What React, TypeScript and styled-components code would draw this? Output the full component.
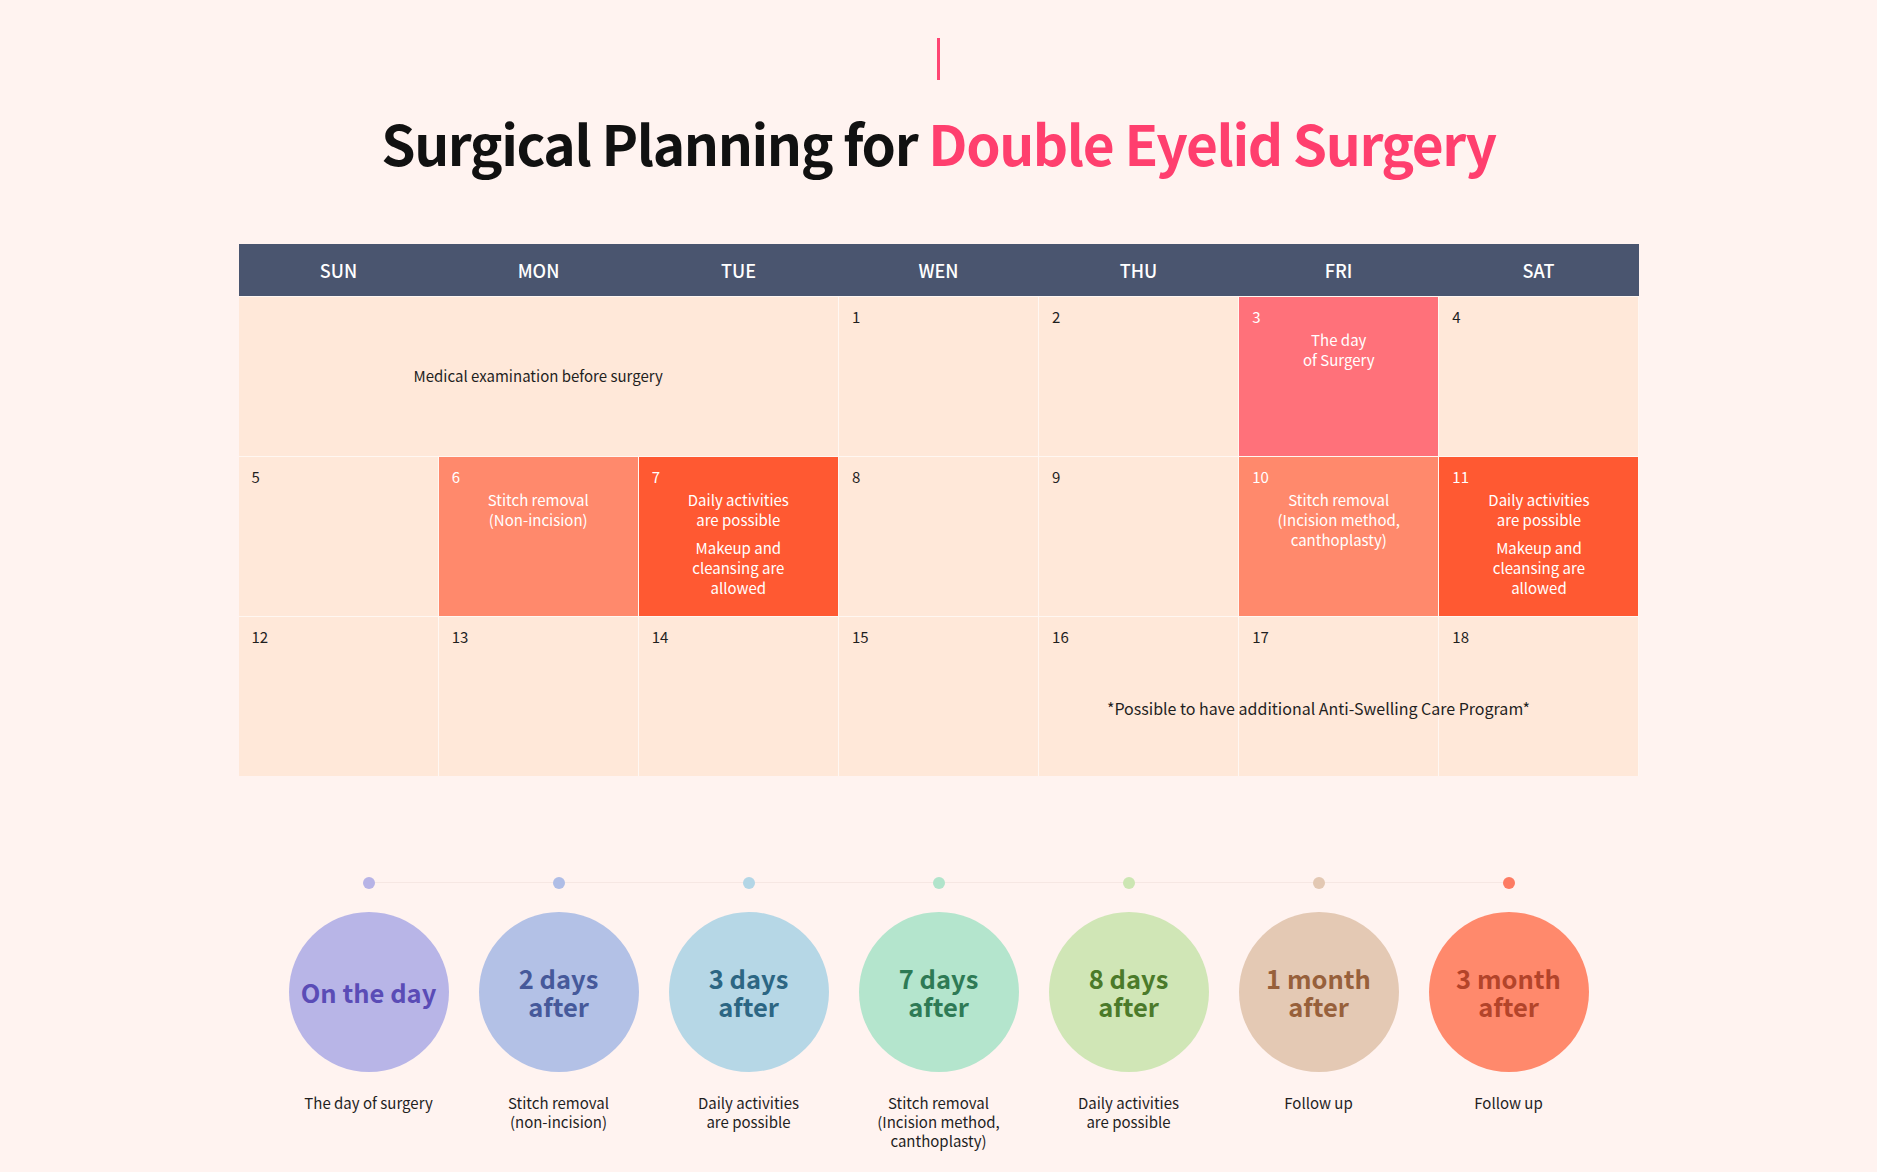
import React from "react";
import styled, { createGlobalStyle } from "styled-components";

const Global = createGlobalStyle`
  html, body { margin: 0; padding: 0; background: #fff3f0; }
  body { font-family: "Noto Sans CJK KR", "Noto Sans", sans-serif; color: #1f1f1f; }
  * { box-sizing: border-box; }
`;

const Page = styled.div`
  display: flex;
  flex-direction: column;
  align-items: center;
  padding: 38px 0 40px;
`;

const Accent = styled.div`
  width: 3px;
  height: 42px;
  background: #ff4573;
`;

const Title = styled.h1`
  margin: 22px 0 0;
  font-size: 55px;
  line-height: 80px;
  font-weight: 700;
  letter-spacing: -1.4px;
  color: #111;
`;

const Pink = styled.span`
  color: #ff3f6e;
`;

const Calendar = styled.div`
  width: 1400px;
  margin-top: 62px;
`;

const HeadRow = styled.div`
  display: grid;
  grid-template-columns: repeat(7, 1fr);
  height: 52px;
  background: #4a556f;
`;

const HeadCell = styled.div`
  display: flex;
  align-items: center;
  justify-content: center;
  color: #fff;
  font-size: 18px;
  font-weight: 500;
`;

const Body = styled.div`
  position: relative;
  display: grid;
  grid-template-columns: repeat(7, 1fr);
  grid-auto-rows: 159px;
  gap: 1px;
  padding-top: 1px;
  background: #fff7f2;
`;

type Tone = "plain" | "surgery" | "stitch" | "daily";
const toneBg: Record<Tone, string> = {
  plain: "#ffe8d9",
  surgery: "#ff717a",
  stitch: "#ff896c",
  daily: "#ff5932",
};

const Cell = styled.div<{ $tone: Tone; $span?: number }>`
  grid-column: span ${(p) => p.$span ?? 1};
  background: ${(p) => toneBg[p.$tone]};
  color: ${(p) => (p.$tone === "plain" ? "#1f1f1f" : "#fff")};
  padding: 10px 13px;
  display: flex;
  flex-direction: column;
  font-size: 15px;
  line-height: 20px;
`;

const DateNum = styled.div`
  font-size: 15px;
  line-height: 20px;
`;

const CellText = styled.div`
  text-align: center;
  display: flex;
  flex-direction: column;
  gap: 8px;
  margin-top: 3px;
`;

const Para = styled.p`
  margin: 0;
`;

const SpanCell = styled(Cell)`
  align-items: center;
  justify-content: center;
  padding-top: 9px;
`;

const Note = styled.div`
  position: absolute;
  left: 800px;
  right: 40px;
  top: 402px;
  text-align: center;
  font-size: 16px;
  line-height: 20px;
  color: #1f1f1f;
  pointer-events: none;
`;

const Timeline = styled.div`
  position: relative;
  display: flex;
  margin-top: 101px;
  &::before {
    content: "";
    position: absolute;
    left: 95px;
    right: 95px;
    top: 5px;
    height: 1px;
    background: #f6e7e3;
  }
`;

const Step = styled.div`
  width: 190px;
  display: flex;
  flex-direction: column;
  align-items: center;
  position: relative;
`;

const Dot = styled.div<{ $c: string }>`
  width: 12px;
  height: 12px;
  border-radius: 50%;
  background: ${(p) => p.$c};
`;

const Circle = styled.div<{ $bg: string; $fg: string }>`
  margin-top: 23px;
  width: 160px;
  height: 160px;
  border-radius: 50%;
  background: ${(p) => p.$bg};
  color: ${(p) => p.$fg};
  display: flex;
  align-items: center;
  justify-content: center;
  text-align: center;
  font-size: 25.5px;
  line-height: 28px;
  font-weight: 700;
`;

const Label = styled.div`
  margin-top: 21px;
  text-align: center;
  font-size: 15px;
  line-height: 19px;
  color: #1f1f1f;
`;

const days = ["SUN", "MON", "TUE", "WEN", "THU", "FRI", "SAT"];

type Day = { n: number; tone: Tone; text?: string[][] };
const rows: Day[] = [
  { n: 1, tone: "plain" },
  { n: 2, tone: "plain" },
  { n: 3, tone: "surgery", text: [["The day", "of Surgery"]] },
  { n: 4, tone: "plain" },
  { n: 5, tone: "plain" },
  { n: 6, tone: "stitch", text: [["Stitch removal", "(Non-incision)"]] },
  {
    n: 7,
    tone: "daily",
    text: [
      ["Daily activities", "are possible"],
      ["Makeup and", "cleansing are", "allowed"],
    ],
  },
  { n: 8, tone: "plain" },
  { n: 9, tone: "plain" },
  {
    n: 10,
    tone: "stitch",
    text: [["Stitch removal", "(Incision method,", "canthoplasty)"]],
  },
  {
    n: 11,
    tone: "daily",
    text: [
      ["Daily activities", "are possible"],
      ["Makeup and", "cleansing are", "allowed"],
    ],
  },
  ...[12, 13, 14, 15, 16, 17, 18].map((n) => ({ n, tone: "plain" as Tone })),
];

const steps = [
  { t: ["On the day"], dot: "#b7b3e6", bg: "#b8b5e7", fg: "#5a4cb6", label: ["The day of surgery"] },
  { t: ["2 days", "after"], dot: "#afbde6", bg: "#b3c1e6", fg: "#46599a", label: ["Stitch removal", "(non-incision)"] },
  { t: ["3 days", "after"], dot: "#b3d6e6", bg: "#b6d7e6", fg: "#2c6683", label: ["Daily activities", "are possible"] },
  { t: ["7 days", "after"], dot: "#b1e4cb", bg: "#b4e5cd", fg: "#2e7a55", label: ["Stitch removal", "(Incision method,", "canthoplasty)"] },
  { t: ["8 days", "after"], dot: "#cce6b3", bg: "#d0e6b6", fg: "#4b7a2a", label: ["Daily activities", "are possible"] },
  { t: ["1 month", "after"], dot: "#e3c8b3", bg: "#e4c9b4", fg: "#97603b", label: ["Follow up"] },
  { t: ["3 month", "after"], dot: "#fd7b63", bg: "#ff896c", fg: "#b3442a", label: ["Follow up"] },
];

const Lines = ({ lines }: { lines: string[] }) => (
  <>
    {lines.map((l, i) => (
      <React.Fragment key={i}>
        {i > 0 && <br />}
        {l}
      </React.Fragment>
    ))}
  </>
);

export default function App() {
  return (
    <>
      <Global />
      <Page>
        <Accent />
        <Title>
          Surgical Planning for <Pink>Double Eyelid Surgery</Pink>
        </Title>
        <Calendar>
          <HeadRow>
            {days.map((d) => (
              <HeadCell key={d}>{d}</HeadCell>
            ))}
          </HeadRow>
          <Body>
            <SpanCell $tone="plain" $span={3}>
              Medical examination before surgery
            </SpanCell>
            {rows.map((d) => (
              <Cell key={d.n} $tone={d.tone}>
                <DateNum>{d.n}</DateNum>
                {d.text && (
                  <CellText>
                    {d.text.map((p, i) => (
                      <Para key={i}>
                        <Lines lines={p} />
                      </Para>
                    ))}
                  </CellText>
                )}
              </Cell>
            ))}
            <Note>*Possible to have additional Anti-Swelling Care Program*</Note>
          </Body>
        </Calendar>
        <Timeline>
          {steps.map((s, i) => (
            <Step key={i}>
              <Dot $c={s.dot} />
              <Circle $bg={s.bg} $fg={s.fg}>
                <div>
                  <Lines lines={s.t} />
                </div>
              </Circle>
              <Label>
                <Lines lines={s.label} />
              </Label>
            </Step>
          ))}
        </Timeline>
      </Page>
    </>
  );
}
